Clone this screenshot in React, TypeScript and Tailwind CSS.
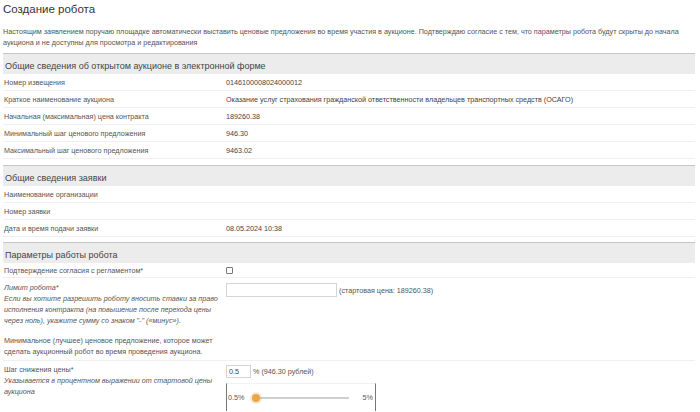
import React from "react";

function SectionHeader({ title }: { title: string }) {
  return (
    <div className="h-[21px] border-t border-[#c6c6c6] bg-[#ececec] pl-[2px] pt-[6px] text-[9px] leading-[12px] text-[#444]">
      {title}
    </div>
  );
}

function Row({ label, value }: { label: string; value?: React.ReactNode }) {
  return (
    <div className="flex h-[17px] items-center border-b border-[#f0f0f0] text-[7.2px] leading-[11px]">
      <div className="w-[223px] shrink-0 pl-[1px] text-[#555]">{label}</div>
      <div className="text-[#444]">{value}</div>
    </div>
  );
}

export default function App() {
  return (
    <div className="h-[412px] w-[700px] overflow-hidden bg-white pl-[3px] pr-[5px] font-['Liberation_Sans',Arial,sans-serif] text-[#333]">
      <h1 className="pt-[2px] text-[11.5px] leading-[15px] text-[#333]">Создание робота</h1>
      <p className="mt-[9px] whitespace-nowrap text-[7.2px] leading-[11px] text-[#555]">
        Настоящим заявлением поручаю площадке автоматически выставить ценовые предложения во время участия в аукционе. Подтверждаю согласие с тем, что параметры робота будут скрыты до начала
        <br />
        аукциона и не доступны для просмотра и редактирования
      </p>

      <div className="mt-[5px]">
        <SectionHeader title="Общие сведения об открытом аукционе в электронной форме" />
        <Row label="Номер извещения" value="0146100008024000012" />
        <Row
          label="Краткое наименование аукциона"
          value="Оказание услуг страхования гражданской ответственности владельцев транспортных средств (ОСАГО)"
        />
        <Row label="Начальная (максимальная) цена контракта" value="189260.38" />
        <Row label="Минимальный шаг ценового предложения" value="946.30" />
        <Row label="Максимальный шаг ценового предложения" value="9463.02" />
      </div>

      <div className="mt-[6px]">
        <SectionHeader title="Общие сведения заявки" />
        <Row label="Наименование организации" />
        <Row label="Номер заявки" />
        <Row label="Дата и время подачи заявки" value="08.05.2024 10:38" />
      </div>

      <div className="mt-[5px]">
        <SectionHeader title="Параметры работы робота" />
        <div className="flex h-[15px] items-center border-b border-[#f0f0f0] text-[7.2px] leading-[11px]">
          <div className="w-[223px] shrink-0 pl-[1px] text-[#555]">Подтверждение согласия с регламентом*</div>
          <div className="h-[7px] w-[7px] rounded-[1px] border border-[#777] bg-white" />
        </div>

        <div className="flex items-start border-b border-[#f0f0f0] pb-[3px] text-[7.2px] leading-[11px]">
          <div className="w-[223px] shrink-0 whitespace-nowrap pl-[1px] pt-[4px] text-[#555]">
            <div className="italic">Лимит робота*</div>
            <div className="italic">
              Если вы хотите разрешить роботу вносить ставки за право
              <br />
              исполнения контракта (на повышение после перехода цены
              <br />
              через ноль), укажите сумму со знаком "-" («минус»).
            </div>
            <div className="mt-[9px]">
              Минимальное (лучшее) ценовое предложение, которое может
              <br />
              сделать аукционный робот во время проведения аукциона.
            </div>
          </div>
          <div className="mt-[5px] flex items-center gap-[2px]">
            <div className="h-[14px] w-[111px] border border-[#d4d4d4] bg-white" />
            <span className="text-[#555]">(стартовая цена: 189260.38)</span>
          </div>
        </div>

        <div className="flex items-start text-[7.2px] leading-[11px]">
          <div className="w-[223px] shrink-0 whitespace-nowrap pl-[1px] pt-[3px] text-[#555]">
            <div>Шаг снижения цены*</div>
            <div className="italic">
              Указывается в процентном выражении от стартовой цены
              <br />
              аукциона
            </div>
          </div>
          <div className="mt-[4px] flex flex-col">
            <div className="flex items-center gap-[2px]">
              <div className="flex h-[13px] w-[25px] items-center border border-[#d4d4d4] bg-white pl-[2px] text-[#444]">0.5</div>
              <span className="text-[#555]">% (946.30 рублей)</span>
            </div>
            <div className="mt-[5px] flex h-[28px] w-[150px] items-center border-l border-r border-t border-l-[#777] border-r-[#777] border-t-[#f2f2f2] text-[#555]">
              <span className="ml-[1px]">0.5%</span>
              <div className="relative ml-[12px] h-[2px] w-[93px] bg-[#cfcfcf]">
                <div className="absolute left-[-4px] top-[-3px] h-[8px] w-[8px] rounded-full bg-[#e8a84a] shadow-[0_0_0_2px_rgba(232,168,74,0.25)]" />
              </div>
              <span className="ml-auto mr-[2px]">5%</span>
            </div>
          </div>
        </div>
      </div>
    </div>
  );
}
